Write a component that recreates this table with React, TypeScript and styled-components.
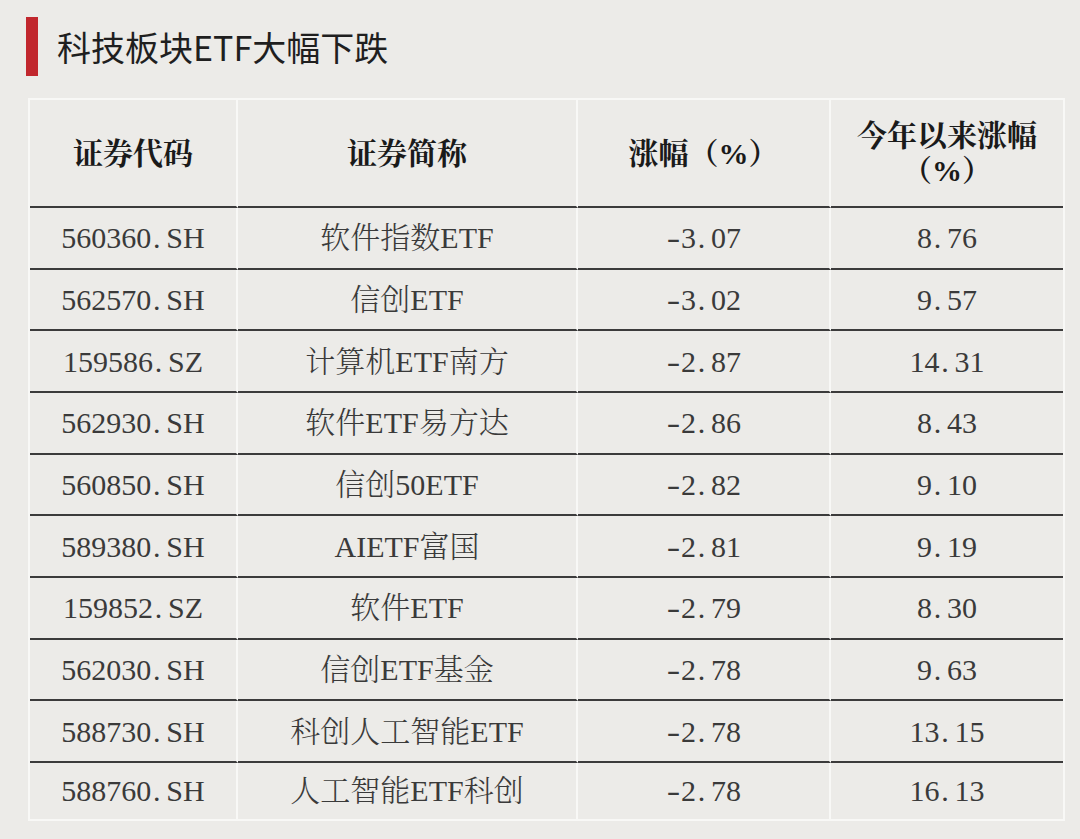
import React from "react";
import styled, { createGlobalStyle } from "styled-components";

const GlobalStyle = createGlobalStyle`
  html, body {
    margin: 0;
    padding: 0;
    background: #ecebe8;
  }
  * { box-sizing: border-box; }
`;

const Page = styled.div`
  width: 1080px;
  min-height: 839px;
  padding: 17px 0 0 26px;
  background: #ecebe8;
`;

const TitleRow = styled.div`
  display: flex;
  align-items: center;
  gap: 19px;
  height: 59px;
`;

const Bar = styled.div`
  width: 12px;
  height: 59px;
  background: #c1272d;
`;

const Title = styled.h1`
  margin: 0;
  font-family: "Noto Sans CJK SC", "Noto Sans", sans-serif;
  font-weight: 400;
  font-size: 34px;
  line-height: 1;
  color: #1f1f1f;
`;

const Table = styled.div`
  margin: 22px 0 0 2px;
  width: 1037px;
  display: grid;
  grid-template-columns: 208px 340px 253px 232px;
  grid-template-rows: 108px repeat(9, 61.67px) 56px;
  border: 2px solid #f8f8f6;
  background: #ecebe8;
`;

const Cell = styled.div<{ $last?: boolean; $bottom?: boolean; $head?: boolean }>`
  display: flex;
  flex-direction: column;
  align-items: center;
  justify-content: center;
  text-align: center;
  border-right: ${(p) => (p.$last ? "none" : "2px solid #f8f8f6")};
  border-bottom: ${(p) => (p.$bottom ? "none" : "2px solid #3b3b3b")};
  font-family: "Liberation Serif", "Noto Serif CJK SC", "Noto Sans CJK SC", serif;
  font-size: 30px;
  line-height: 35px;
  color: ${(p) => (p.$head ? "#1a1a1a" : "#3a3a3a")};
  font-weight: ${(p) => (p.$head ? 700 : 300)};
  white-space: nowrap;
`;

const Line = styled.span`
  display: block;
`;

const Narrow = styled.span<{ $align?: string }>`
  display: inline-block;
  width: 0.5em;
  text-align: ${(p) => p.$align || "center"};
  padding-left: ${(p) => (p.$align === "left" ? "0.06em" : "0")};
`;

const Dash = styled(Narrow)`
  transform: scaleX(1.35);
`;

const fmt = (s: string) => (
  <Line>
    {s.split("").map((ch, i) => {
      if (ch === ".") return <Narrow key={i} $align="left">.</Narrow>;
      if (ch === "-") return <Dash key={i}>-</Dash>;
      return <React.Fragment key={i}>{ch}</React.Fragment>;
    })}
  </Line>
);

const rows: [string, string, string, string][] = [
  ["560360.SH", "软件指数ETF", "-3.07", "8.76"],
  ["562570.SH", "信创ETF", "-3.02", "9.57"],
  ["159586.SZ", "计算机ETF南方", "-2.87", "14.31"],
  ["562930.SH", "软件ETF易方达", "-2.86", "8.43"],
  ["560850.SH", "信创50ETF", "-2.82", "9.10"],
  ["589380.SH", "AIETF富国", "-2.81", "9.19"],
  ["159852.SZ", "软件ETF", "-2.79", "8.30"],
  ["562030.SH", "信创ETF基金", "-2.78", "9.63"],
  ["588730.SH", "科创人工智能ETF", "-2.78", "13.15"],
  ["588760.SH", "人工智能ETF科创", "-2.78", "16.13"],
];

export default function App() {
  return (
    <>
      <GlobalStyle />
      <Page>
        <TitleRow>
          <Bar />
          <Title>科技板块ETF大幅下跌</Title>
        </TitleRow>
        <Table>
          <Cell $head><Line>证券代码</Line></Cell>
          <Cell $head><Line>证券简称</Line></Cell>
          <Cell $head><Line>涨幅（%）</Line></Cell>
          <Cell $head $last>
            <Line>今年以来涨幅</Line>
            <Line>（%）</Line>
          </Cell>
          {rows.map((r, i) => {
            const bottom = i === rows.length - 1;
            return (
              <React.Fragment key={r[0]}>
                <Cell $bottom={bottom}>{fmt(r[0])}</Cell>
                <Cell $bottom={bottom}><Line>{r[1]}</Line></Cell>
                <Cell $bottom={bottom}>{fmt(r[2])}</Cell>
                <Cell $bottom={bottom} $last>{fmt(r[3])}</Cell>
              </React.Fragment>
            );
          })}
        </Table>
      </Page>
    </>
  );
}
